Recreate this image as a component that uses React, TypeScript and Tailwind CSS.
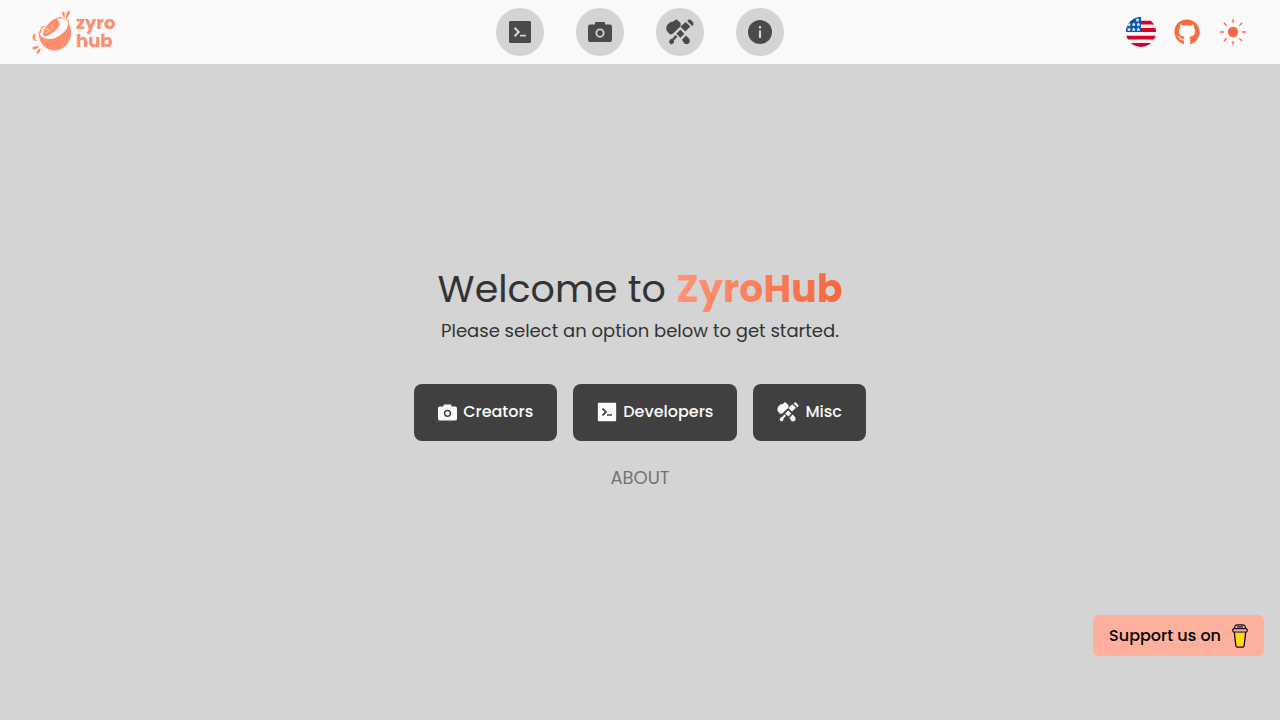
import type { ReactNode } from "react";
import { FaGithub } from "react-icons/fa";

type IconProps = { className?: string };

const TerminalIcon = ({ className }: IconProps) => (
  <svg viewBox="0 0 24 24" className={className} fill="currentColor" aria-hidden="true">
    <path
      fillRule="evenodd"
      d="M2 1h20a1 1 0 0 1 1 1v20a1 1 0 0 1-1 1H2a1 1 0 0 1-1-1V2a1 1 0 0 1 1-1Zm3.800 7.600 3.400 3.400-3.400 3.400 1.500 1.500L12.200 12 7.300 7.100ZM12 14.700v1.900h6v-1.900Z"
    />
  </svg>
);

const CameraIcon = ({ className }: IconProps) => (
  <svg viewBox="0 0 24 24" className={className} fill="currentColor" aria-hidden="true">
    <path
      fillRule="evenodd"
      d="M8 2h8a1 1 0 0 1 1 1v1.500h5A2 2 0 0 1 24 6.500V20a2 2 0 0 1-2 2H2a2 2 0 0 1-2-2V6.500a2 2 0 0 1 2-2h5V3a1 1 0 0 1 1-1Zm4 6.500a4.600 4.600 0 1 0 0 9.200 4.600 4.600 0 0 0 0-9.200Zm0 1.800a2.800 2.800 0 1 1 0 5.600 2.800 2.800 0 0 1 0-5.600Z"
    />
  </svg>
);

const ToolsIcon = ({ className }: IconProps) => (
  <svg viewBox="0 0 28 26" className={className} fill="currentColor" aria-hidden="true">
    <path d="M.2 8.500 1.300 5.700 4.500 3l3-.5L9.200.7h2l3.500 3.500-.2 3.300-8 7.500-2.200.5-2.200-2-1.600-2.200Z" />
    <path d="m19.600 2.900 4.700 4.700-5 5-4.900-4.900Z" />
    <path d="m21.200 2 1.700-1.500h1.500l3 3.300v2.500l-1.500.5Z" />
    <path d="m14.400 10.700 4 4.100-3.900 3.900-4.200-3.900Z" />
    <path d="m9.400 15.900 2 1.900-3.300 3.500-.5 3-2.700 1.100-2-2.300 1.100-2.600 2.500-1Z" />
    <path d="m19.900 16.400 3.600 3.500.3 2.800-1.700 2.200-3.300.1-2.900-4.300Z" />
  </svg>
);

const InfoIcon = ({ className }: IconProps) => (
  <svg viewBox="0 0 24 24" className={className} aria-hidden="true">
    <circle cx="12" cy="12" r="12" fill="currentColor" />
    <path d="M10.900 6h2.200v2.400h-2.200ZM10.900 10.500h2.200v7.500h-2.200Z" fill="#d4d4d4" />
  </svg>
);

const SunIcon = ({ className }: IconProps) => (
  <svg viewBox="0 0 26 26" className={className} aria-hidden="true">
    <circle cx="13" cy="13" r="5.200" fill="currentColor" />
    <path
      d="M13 0v4M13 22v4M0 13h4M22 13h4M3.800 3.800l2.900 2.900M19.300 19.300l2.900 2.900M22.200 3.800l-2.900 2.900M6.700 19.300l-2.900 2.900"
      stroke="currentColor"
      strokeWidth="1.300"
    />
  </svg>
);

const stars = [
  [11.500, 3],
  [3, 7.500], [7.700, 7.500], [12.400, 7.500],
  [3, 12.500], [7.700, 12.500], [12.400, 12.500],
];

const FlagIcon = ({ className }: IconProps) => (
  <svg viewBox="0 0 30 30" className={className} aria-hidden="true">
    <clipPath id="flag-round">
      <circle cx="15" cy="15" r="15" />
    </clipPath>
    <g clipPath="url(#flag-round)">
      <path d="M0 0h30v30H0Z" fill="#f5f5f5" />
      <path d="M0 3.700h30v3.700H0ZM0 11h30v4H0ZM0 18.700h30v3.800H0ZM0 26h30v4H0Z" fill="#d80027" />
      <path d="M0 0h15v15H0Z" fill="#0052b4" />
      {stars.map(([x, y]) => (
        <path
          key={`${x}-${y}`}
          transform={`translate(${x} ${y})`}
          d="m0-2.200.7 1.500h1.500l-1.200 1 .5 1.600L0 1l-1.500.9.500-1.600-1.200-1h1.500Z"
          fill="#f0f0f0"
        />
      ))}
    </g>
  </svg>
);

const CoffeeIcon = ({ className }: IconProps) => (
  <svg viewBox="0 0 16 24" className={className} aria-hidden="true">
    <path d="M3.200 10h9.600l-1.200 11.500q-.2 1-1.200 1H5.600q-1 0-1.200-1Z" fill="#ffdd00" />
    <path d="m2.200 8 1.700 13.700q.2 1.500 1.400 1.500h5.400q1.200 0 1.400-1.500L13.800 8" fill="none" stroke="#0d0c22" strokeWidth="1.300" />
    <rect x=".7" y="4.700" width="14.600" height="3.300" rx="1.500" fill="#ffb09c" stroke="#0d0c22" strokeWidth="1.200" />
    <path d="M2.300 4.500 3 2.200Q3.300.9 5 .9h6q1.700 0 2 1.300l.7 2.300ZM5 2.800h6" fill="#ffb09c" stroke="#0d0c22" strokeWidth="1.200" />
  </svg>
);

const CoconutIcon = ({ className }: IconProps) => (
  <svg viewBox="36 24 124 142" className={className} fill="#ff8e6e" aria-hidden="true">
    <path d="M58 102c12 13 32 17 51 8 19-8 35-24 37-43 14 20 11 53-12 72-22 17-53 12-67-9-7-10-10-18-9-28Z" />
    <path d="M70 100c-2-14 17-37 34-46 8-2 13 4 16 17-5 12-18 25-35 33-8 4-14 4-15-4Z" />
    <path
      d="M59 105c-2-5-2-9-1-12M110 52c16-3 31 1 36 10 2 5 2 8 1 13"
      fill="none"
      stroke="#ff8e6e"
      strokeWidth="3.500"
      strokeLinecap="round"
    />
    <path
      d="M79 86c8-4 11 2 6 6-2 2-4 3-7 3M96 76c4-3 5 1 1 6"
      fill="none"
      stroke="#fafafa"
      strokeWidth="2.500"
      strokeLinecap="round"
    />
    <path d="M128 33c5-3 8 3 7 15l-2 1c-5-5-8-12-5-16ZM147 30c7 0 5 9-8 24l-1-1c0-12 3-22 9-23ZM41 101c3-3 7-1 6 2-3 5-3 11 5 18-10 0-20-10-11-20ZM38 145c-3-4 3-10 18-9l1 1c-4 8-15 12-19 8ZM51 159c-4-3 1-12 10-17l1 1c0 10-6 20-11 16Z" />
    <path d="M74 76c-9 2-14 10-11 20" fill="none" stroke="#ff8e6e" strokeWidth="4" />
  </svg>
);

const navItems = [
  { label: "Developers", Icon: TerminalIcon },
  { label: "Creators", Icon: CameraIcon },
  { label: "Misc", Icon: ToolsIcon },
  { label: "About", Icon: InfoIcon },
];

const Header = () => (
  <header className="grid h-16 grid-cols-[1fr_auto_1fr] items-center bg-[#fafafa] px-8">
    <a href="#home" className="flex items-center gap-[3px] justify-self-start text-[#ff8e6e]">
      <CoconutIcon className="h-[47px] w-[41px]" />
      <span className="text-[18px] font-bold leading-[18px]">
        zyro
        <br />
        hub
      </span>
    </a>
    <nav className="flex gap-8">
      {navItems.map(({ label, Icon }) => (
        <a
          key={label}
          href={`#${label.toLowerCase()}`}
          aria-label={label}
          className="flex size-12 items-center justify-center rounded-full bg-[#d4d4d4] text-[#4a4a4a]"
        >
          <Icon className={label === "Misc" ? "h-[26px] w-7" : "size-6"} />
        </a>
      ))}
    </nav>
    <div className="flex items-center gap-[18px] justify-self-end pr-[2px] text-[#f76b42]">
      <button type="button" aria-label="Language">
        <FlagIcon className="size-[30px]" />
      </button>
      <a href="#github" aria-label="GitHub">
        <FaGithub size={26} />
      </a>
      <button type="button" aria-label="Toggle theme" className="pl-[2px]">
        <SunIcon className="size-[26px]" />
      </button>
    </div>
  </header>
);

const OptionButton = ({ children }: { children: ReactNode }) => (
  <button
    type="button"
    className="flex h-[57px] items-center justify-center gap-[6px] rounded-lg bg-[#404040] px-6 font-medium text-[#fafafa]"
  >
    {children}
  </button>
);

const App = () => {
  return (
    <div className="flex min-h-screen flex-col bg-[#d4d4d4] font-['Poppins','Inter',sans-serif] text-base">
      <Header />
      <main className="flex flex-1 flex-col items-center justify-center pb-[30px] text-[#333333]">
        <h1 className="text-[38px] leading-[48px]">
          Welcome to{" "}
          <span className="bg-linear-to-r from-[#ff9475] to-[#f5673d] bg-clip-text font-bold text-transparent">
            ZyroHub
          </span>
        </h1>
        <p className="mt-1 text-[18px] leading-7">Please select an option below to get started.</p>
        <div className="mt-[39px] flex gap-4">
          <OptionButton>
            <CameraIcon className="size-[19px]" />
            Creators
          </OptionButton>
          <OptionButton>
            <TerminalIcon className="size-5" />
            Developers
          </OptionButton>
          <OptionButton>
            <ToolsIcon className="h-5 w-[22px]" />
            Misc
          </OptionButton>
        </div>
        <a href="#about" className="mt-[25px] text-[18px] leading-6 text-[#737373]">
          ABOUT
        </a>
      </main>
      <a
        href="#support"
        className="fixed right-4 bottom-16 flex h-[41px] items-center gap-[11px] rounded-md bg-[#ffb09c] px-4 font-medium text-black"
      >
        Support us on
        <CoffeeIcon className="h-6 w-4" />
      </a>
    </div>
  );
};

export default App;
